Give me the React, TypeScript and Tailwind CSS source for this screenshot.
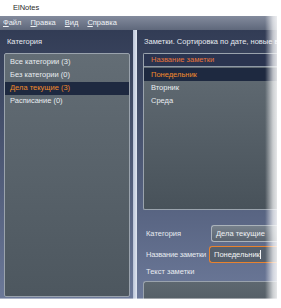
import React from 'react'

const font = { fontFamily: '"Liberation Sans", Arial, sans-serif' }

const menu = ['Файл', 'Правка', 'Вид', 'Справка']

const categories = [
  { id: 'all', label: 'Все категории (3)' },
  { id: 'none', label: 'Без категории (0)' },
  { id: 'current', label: 'Дела текущие (3)', selected: true },
  { id: 'sched', label: 'Расписание (0)' },
]

const notes = [
  { id: 'mon', title: 'Понедельник', selected: true },
  { id: 'tue', title: 'Вторник' },
  { id: 'wed', title: 'Среда' },
]

export default function App() {
  return (
    <div className="relative w-[281px] h-[308px] bg-white overflow-hidden text-[7.5px] leading-none" style={font}>
      {/* title bar */}
      <div className="h-[16px] flex items-center pl-[13px] text-[#2a2a2a] text-[7.5px]">ElNotes</div>

      <div className="w-[277px] h-[283px] flex flex-col">
        {/* menu */}
        <div className="h-[14px] flex items-center gap-[9px] pl-[3px] bg-gradient-to-b from-[#838b9d] to-[#5f687b] text-[#eef1f5]">
          {menu.map((m) => (
            <span key={m}>
              <u>{m[0]}</u>
              {m.slice(1)}
            </span>
          ))}
        </div>

        {/* content */}
        <div className="flex-1 flex bg-gradient-to-b from-[#323c55] to-[#6c7999]">
          {/* left panel */}
          <div className="w-[133px] flex flex-col pl-[4px] pr-[3px] pb-[2px]">
            <div className="h-[23px] flex items-center pl-[3px] text-[#e6eaf0]">Категория</div>
            <div className="flex-1 border border-[#9aa3ad] rounded-[2px] bg-gradient-to-b from-[#636d75] to-[#4d575f] pt-[1.5px]">
              {categories.map((c) => (
                <div
                  key={c.id}
                  className={`h-[13px] flex items-center pl-[5px] ${
                    c.selected ? 'bg-[#1e2940] text-[#f08a2c]' : 'text-[#e8ecf0]'
                  }`}
                >
                  {c.label}
                </div>
              ))}
            </div>
          </div>

          {/* splitter */}
          <div className="w-[4px] bg-gradient-to-r from-[#b8c2d6] to-[#e2e8f2]" />

          {/* right panel */}
          <div className="flex-1 flex flex-col pl-[6px] min-w-0">
            <div className="h-[23px] flex items-center pl-[1px] text-[#e6eaf0] whitespace-nowrap overflow-hidden">
              Заметки. Сортировка по дате, новые в начале
            </div>
            <div className="h-[157px] border border-r-0 border-[#9aa3ad] rounded-l-[2px] bg-gradient-to-b from-[#636d75] to-[#48525a]">
              <div className="h-[13px] flex items-center pl-[7px] bg-[#2a3450] text-[#e8743a] border-b border-[#8f99a6]">
                Название заметки
              </div>
              <div className="pt-[1px]">
                {notes.map((n) => (
                  <div
                    key={n.id}
                    className={`h-[13px] flex items-center pl-[7px] ${
                      n.selected ? 'bg-[#1e2940] text-[#f08a2c]' : 'text-[#e8ecf0]'
                    }`}
                  >
                    {n.title}
                  </div>
                ))}
              </div>
            </div>

            <div className="mt-[15px] flex items-center h-[17px]">
              <span className="w-[68px] shrink-0 pl-[3px] whitespace-nowrap text-[#e6eaf0]">Категория</span>
              <div className="flex-1 h-full flex items-center pl-[4px] border border-r-0 border-[#aab2ba] rounded-l-[3px] bg-gradient-to-b from-[#76808b] to-[#5a646f] text-[#eef1f4] whitespace-nowrap">
                Дела текущие
              </div>
            </div>

            <div className="mt-[4px] flex items-center h-[17px]">
              <span className="w-[66px] shrink-0 pl-[3px] whitespace-nowrap tracking-[-0.2px] text-[#e6eaf0]">Название заметки</span>
              <div className="flex-1 h-full flex items-center pl-[4px] border-[1.5px] border-r-0 border-[#e8822e] rounded-l-[3px] bg-[#56606c] text-[#f2f4f6] whitespace-nowrap">
                Понедельник
                <span className="w-px h-[9px] bg-[#f2f4f6]" />
              </div>
            </div>

            <div className="h-[18px] flex items-center pl-[3px] text-[#e6eaf0]">Текст заметки</div>
            <div className="flex-1 border border-r-0 border-b-0 border-[#9aa3ad] rounded-tl-[3px] bg-gradient-to-b from-[#5e6870] to-[#555f67]" />
          </div>
        </div>
      </div>

      {/* soft edge fades */}
      <div className="absolute right-0 top-[16px] bottom-0 w-[16px] bg-gradient-to-r from-transparent via-white/70 to-white" />
      <div className="absolute left-0 right-0 bottom-0 h-[10px] bg-gradient-to-b from-white/40 to-white" />
    </div>
  )
}
